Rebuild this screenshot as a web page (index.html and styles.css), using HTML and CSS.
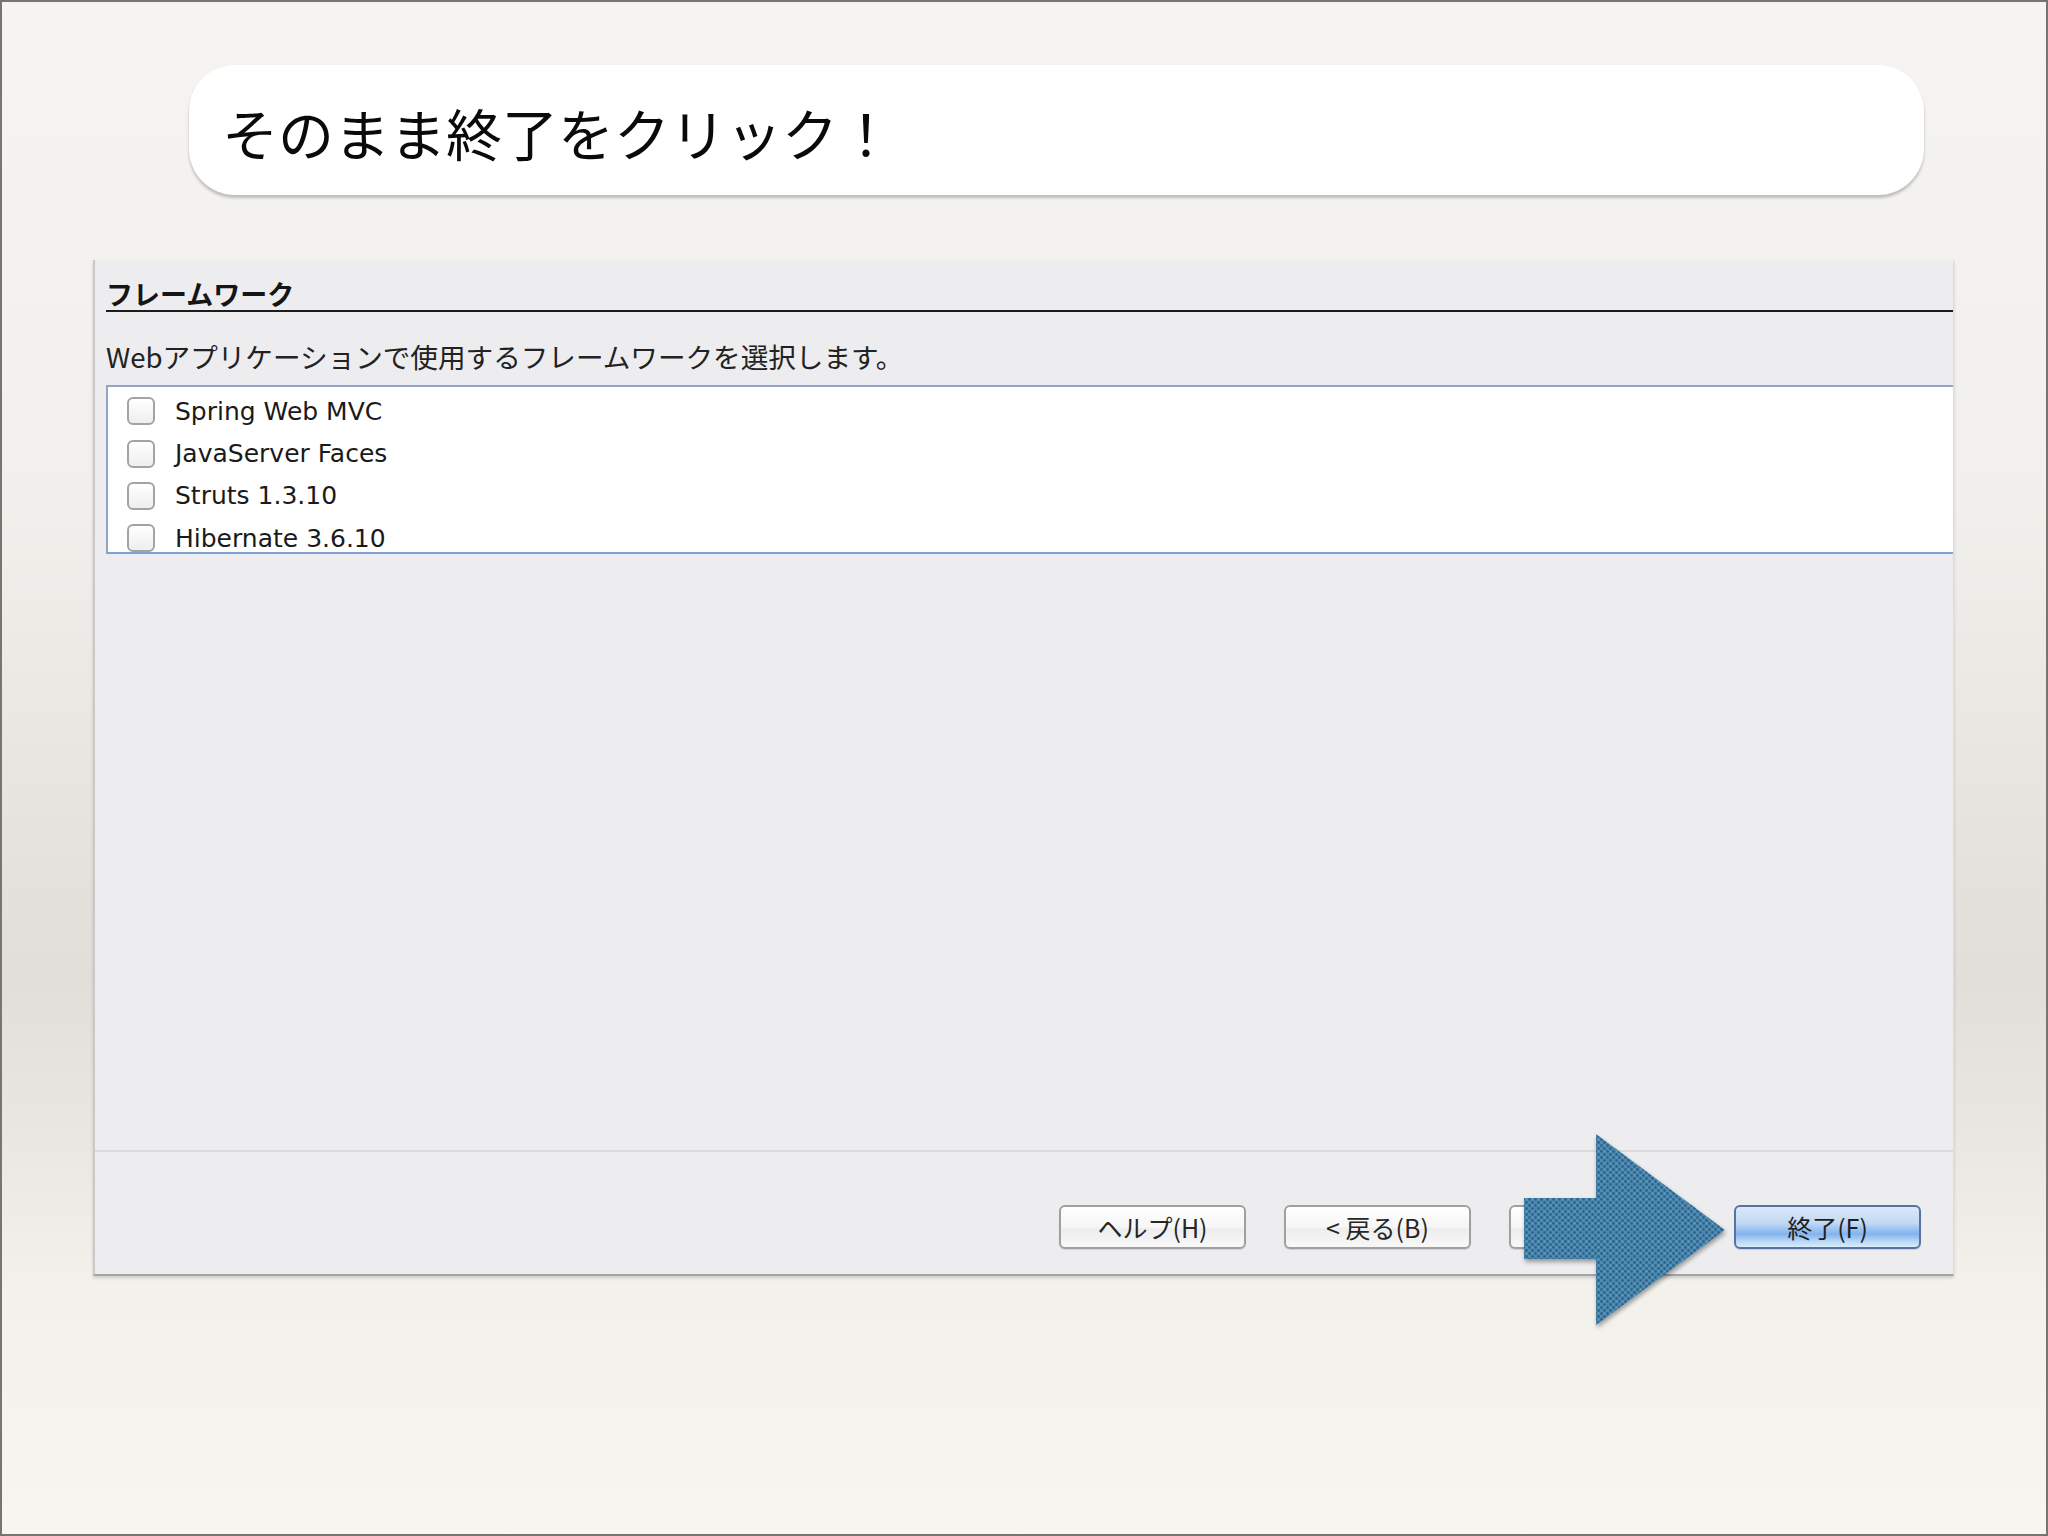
FILE: index.html
```html
<!DOCTYPE html>
<html lang="ja">
<head>
<meta charset="utf-8">
<title>フレームワーク</title>
<link rel="stylesheet" href="styles.css">
</head>
<body>
<div class="slide">
  <div class="bubble"><span class="bubble-text">そのまま終了をクリック！</span></div>

  <div class="panel">
    <div class="heading">フレームワーク</div>
    <div class="desc">Webアプリケーションで使用するフレームワークを選択します。</div>
    <div class="list">
      <div class="row"><span class="check"></span><span class="label">Spring Web MVC</span></div>
      <div class="row"><span class="check"></span><span class="label">JavaServer Faces</span></div>
      <div class="row"><span class="check"></span><span class="label">Struts 1.3.10</span></div>
      <div class="row"><span class="check"></span><span class="label">Hibernate 3.6.10</span></div>
    </div>
    <div class="spacer"></div>
    <div class="footer">
      <div class="btn">ヘルプ(H)</div>
      <div class="btn">&lt; 戻る(B)</div>
      <div class="btn btn-disabled">次へ &gt;(N)</div>
      <div class="btn btn-default">終了(F)</div>
    </div>
  </div>

  <svg class="arrow" width="212" height="200" viewBox="0 0 212 200">
    <defs>
      <pattern id="weave" width="6" height="6" patternUnits="userSpaceOnUse">
        <rect width="6" height="6" fill="#4d8bb2"/>
        <circle cx="1.5" cy="1.5" r="1.4" fill="#2f6389"/>
        <circle cx="4.5" cy="4.5" r="1.4" fill="#2f6389"/>
        <circle cx="4.5" cy="1.5" r="0.8" fill="#65a0c4"/>
      </pattern>
    </defs>
    <polygon points="2,66 74,66 74,2 203,98 74,193 74,127 2,127" fill="url(#weave)"/>
  </svg>
</div>
</body>
</html>
```

FILE: styles.css
```css
html, body {
  margin: 0;
  padding: 0;
}

body {
  width: 2048px;
  height: 1536px;
  overflow: hidden;
  font-family: "Noto Sans CJK JP", "DejaVu Sans", sans-serif;
}

.slide {
  position: relative;
  box-sizing: border-box;
  width: 2048px;
  height: 1536px;
  border: 2px solid #76756f;
  background: linear-gradient(to bottom,
    #f5f4f0 0%,
    #f1f0ec 32%,
    #e9e8e3 46%,
    #e2e1dc 58%,
    #e0dfda 64%,
    #e8e7e2 74%,
    #f2f1ec 84%,
    #f6f5f0 100%);
  display: flex;
  flex-direction: column;
}

.bubble {
  margin: 63px 0 0 187px;
  width: 1735px;
  height: 130px;
  box-sizing: border-box;
  background: #ffffff;
  border-radius: 46px;
  box-shadow: 0 3px 3px rgba(0, 0, 0, 0.22);
  padding: 3px 0 0 33px;
  display: flex;
  align-items: center;
}

.bubble-text {
  font-family: "Noto Sans CJK JP", sans-serif;
  font-size: 56px;
  font-weight: 400;
  color: #0a0a0a;
  line-height: 1;
}

.panel {
  margin: 65px 0 0 91px;
  width: 1861px;
  height: 1016px;
  box-sizing: border-box;
  background: #ededf0;
  border-left: 2px solid #c9c9cb;
  border-right: 1px solid #dcdcdf;
  border-bottom: 2px solid #a4a4a6;
  box-shadow: 0 2px 3px rgba(0, 0, 0, 0.15);
  display: flex;
  flex-direction: column;
}

.heading {
  margin-left: 11px;
  padding-top: 18px;
  font-family: "Noto Sans CJK JP", sans-serif;
  font-size: 27px;
  font-weight: 700;
  line-height: 32px;
  color: #151515;
  border-bottom: 2px solid #1c1c1c;
}

.desc {
  margin: 28px 0 0 11px;
  font-family: "Noto Sans CJK JP", sans-serif;
  font-size: 27.6px;
  line-height: 32px;
  color: #222222;
}

.list {
  margin: 13px 0 0 11px;
  height: 169px;
  box-sizing: border-box;
  background: #ffffff;
  border-top: 2px solid #8fa6c6;
  border-left: 2px solid #8fa6c6;
  border-bottom: 2px solid #7ea3d1;
  padding-top: 3px;
  overflow: hidden;
}

.row {
  height: 42.4px;
  display: flex;
  align-items: center;
}

.check {
  width: 28px;
  height: 28px;
  box-sizing: border-box;
  margin-left: 19px;
  border: 2px solid #a3a3a3;
  border-radius: 6px;
  background: linear-gradient(to bottom, #ffffff, #eeeeee);
}

.label {
  margin-left: 20px;
  font-family: "DejaVu Sans", sans-serif;
  font-size: 25px;
  color: #1a1a1a;
}

.spacer {
  flex: 1;
}

.footer {
  height: 124px;
  box-sizing: border-box;
  border-top: 2px solid #dbdbdd;
  padding: 53px 32px 0 0;
  display: flex;
  justify-content: flex-end;
  align-items: flex-start;
  gap: 38px;
}

.btn {
  width: 187px;
  height: 44px;
  box-sizing: border-box;
  border: 2px solid #a0a0a0;
  border-radius: 6px;
  background: linear-gradient(to bottom, #ffffff 0%, #f6f6f6 50%, #ededed 55%, #f8f8f8 100%);
  box-shadow: 0 1px 1px rgba(0, 0, 0, 0.12);
  display: flex;
  align-items: center;
  justify-content: center;
  font-family: "Noto Sans CJK JP", sans-serif;
  font-size: 25px;
  line-height: 1;
  color: #262626;
}

.btn-disabled {
  color: #a0a0a0;
}

.btn-default {
  border-color: #5a72a0;
  background: linear-gradient(to bottom,
    #dbe8f8 0%,
    #c3d9f4 40%,
    #9cc4f0 55%,
    #84b4ec 68%,
    #b6d6f7 85%,
    #d8ecfc 100%);
  color: #1f1f1f;
}

.arrow {
  position: absolute;
  left: 1520px;
  top: 1130px;
  filter: drop-shadow(1px 3px 2px rgba(0, 0, 0, 0.35));
}
```
